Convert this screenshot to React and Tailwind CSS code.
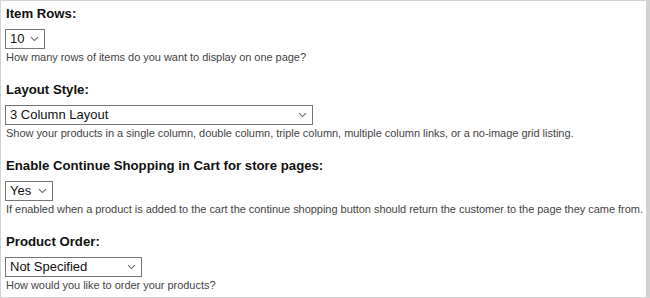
import React from "react";

function Chevron() {
  return (
    <svg width="9" height="6" viewBox="0 0 9 6" className="shrink-0">
      <path d="M1 1.2 L4.5 4.6 L8 1.2" fill="none" stroke="#6b6b6b" strokeWidth="1.1" />
    </svg>
  );
}

function Select({ value, width }) {
  return (
    <div
      className="flex h-[20px] items-center justify-between border border-[#767676] bg-white pl-[4px] pr-[5px] text-[13px] leading-[18px] text-[#111]"
      style={{ width }}
    >
      <span>{value}</span>
      <Chevron />
    </div>
  );
}

function Section({ label, value, width, desc, first }) {
  return (
    <div className={first ? "" : "mt-[18px]"}>
      <div className="h-[16px] whitespace-nowrap pl-[1px] text-[13.2px] font-bold leading-[16px] text-[#111]">{label}</div>
      <div className="mt-[7px]">
        <Select value={value} width={width} />
      </div>
      <div className="mt-[2px] h-[13px] whitespace-nowrap pl-[1px] text-[11px] leading-[13px] tracking-[-0.035px] text-[#444]">{desc}</div>
    </div>
  );
}

export default function App() {
  return (
    <div
      className="h-[298px] w-[650px] overflow-hidden bg-[#d2d2d2] pl-[1px] pt-[1px]"
      style={{ fontFamily: '"Liberation Sans", Arial, sans-serif' }}
    >
      <div className="h-[296px] w-[645px] overflow-hidden bg-white pl-[4px] pt-[5px]">
        <Section
          first
          label="Item Rows:"
          value="10"
          width={40}
          desc="How many rows of items do you want to display on one page?"
        />
        <Section
          label="Layout Style:"
          value="3 Column Layout"
          width={308}
          desc="Show your products in a single column, double column, triple column, multiple column links, or a no-image grid listing."
        />
        <Section
          label="Enable Continue Shopping in Cart for store pages:"
          value="Yes"
          width={48}
          desc="If enabled when a product is added to the cart the continue shopping button should return the customer to the page they came from."
        />
        <Section
          label="Product Order:"
          value="Not Specified"
          width={137}
          desc="How would you like to order your products?"
        />
      </div>
    </div>
  );
}
